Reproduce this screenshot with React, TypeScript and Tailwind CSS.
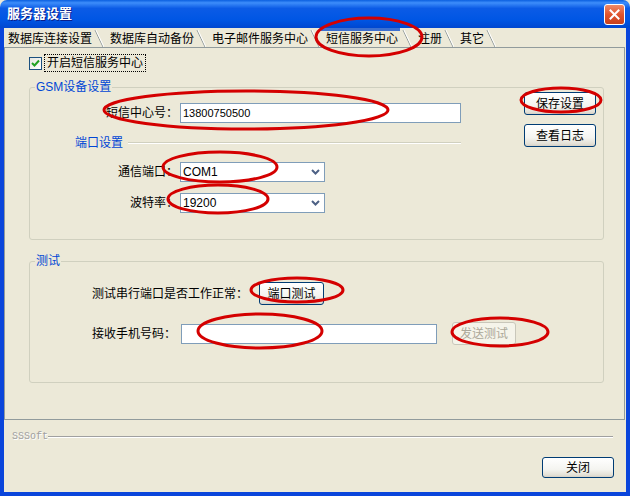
import React from "react";

const tabs = [
  { key: "db", label: "数据库连接设置", first: true },
  { key: "backup", label: "数据库自动备份" },
  { key: "mail", label: "电子邮件服务中心" },
  { key: "sms", label: "短信服务中心", active: true },
  { key: "reg", label: "注册" },
  { key: "other", label: "其它" },
];

const rings = [
  { cx: 369, cy: 37, rx: 53, ry: 19 },
  { cx: 246, cy: 110, rx: 142, ry: 19 },
  { cx: 561, cy: 100, rx: 40, ry: 12 },
  { cx: 220, cy: 167, rx: 57, ry: 15 },
  { cx: 218, cy: 199, rx: 50, ry: 14 },
  { cx: 297, cy: 290, rx: 46, ry: 12 },
  { cx: 260, cy: 331, rx: 62, ry: 17 },
  { cx: 500, cy: 332, rx: 48, ry: 14 },
];

function Slant() {
  return (
    <svg width="10" height="17" viewBox="0 0 10 17" className="ml-[2px] shrink-0">
      <line x1="1" y1="0" x2="9" y2="17" stroke="#919b9c" />
      <line x1="2" y1="0" x2="10" y2="17" stroke="#ffffff" />
    </svg>
  );
}

function XpButton({ children, disabled }: { children: React.ReactNode; disabled?: boolean }) {
  if (disabled) {
    return (
      <div className="flex h-full w-full items-center justify-center rounded-[3px] border border-[#c9c7ba] bg-[#f5f4ea] text-[#aca899]">
        {children}
      </div>
    );
  }
  return (
    <div className="flex h-full w-full items-center justify-center rounded-[3px] border border-[#003c74] bg-[linear-gradient(180deg,#ffffff_0%,#f4f4f0_60%,#e3e0d6_90%,#d6d0c5_100%)] text-black">
      {children}
    </div>
  );
}

function Combo({ value }: { value: string }) {
  return (
    <div className="flex h-[20px] w-[145px] items-center border border-[#7f9db9] bg-white">
      <span className="flex-1 pl-[2px] font-['Liberation_Sans',sans-serif] text-[12px]">{value}</span>
      <div className="flex h-full w-[17px] items-center justify-center">
        <svg width="9" height="6" viewBox="0 0 9 6">
          <path d="M1 1 L4.5 4.5 L8 1" fill="none" stroke="#4d6185" strokeWidth="2" />
        </svg>
      </div>
    </div>
  );
}

export default function App() {
  return (
    <div className="relative h-[496px] w-[630px] overflow-hidden bg-[#ece9d8] font-['Liberation_Sans','Noto_Sans_CJK_SC',sans-serif] text-[12px] leading-[14px] text-black">
      {/* Title bar */}
      <div className="flex h-[28px] items-center rounded-t-[7px] bg-[linear-gradient(180deg,#0a5fe0_0%,#3d8dfa_10%,#0b5be6_30%,#0056e4_70%,#0047d0_100%)] pl-[7px] pr-[5px]">
        <span className="flex-1 text-[13px] font-bold text-white [text-shadow:1px_1px_#0a1e8a]">服务器设置</span>
        <div className="flex h-[21px] w-[21px] items-center justify-center rounded-[3px] border border-white bg-[linear-gradient(180deg,#f08a67_0%,#e0552e_50%,#c7401d_100%)]">
          <svg width="11" height="11" viewBox="0 0 11 11">
            <path d="M1.5 1.5 L9.5 9.5 M9.5 1.5 L1.5 9.5" stroke="#ffffff" strokeWidth="2" strokeLinecap="square" />
          </svg>
        </div>
      </div>

      {/* Frame + client */}
      <div className="flex h-[468px] flex-col border-x-[4px] border-b-[4px] border-[#0a45db]">
        <div className="flex h-[464px] flex-col">
          {/* Tabs */}
          <div className="flex h-[19px] items-end">
            {tabs.map((t) =>
              t.active ? (
                <div key={t.key} className="flex h-[19px] items-end">
                  <span className="flex h-[19px] items-center border-t-[3px] border-[#3c6fd0] pl-[6px] pr-[2px]">{t.label}</span>
                  <Slant />
                </div>
              ) : (
                <div key={t.key} className="flex h-[17px] items-end">
                  <span className={t.first ? "flex h-[17px] items-center pl-[4px]" : "flex h-[17px] items-center pl-[6px]"}>{t.label}</span>
                  <Slant />
                </div>
              ),
            )}
          </div>

          {/* Tab panel */}
          <div className="mr-[1px] flex h-[373px] flex-col border border-[#919b9c] pl-[24px] pr-[20px]">
            <div className="mt-[6px] flex h-[18px] items-center">
              <div className="flex h-[13px] w-[13px] items-center justify-center border border-[#1c5180] bg-[linear-gradient(135deg,#e6e6e0_0%,#ffffff_100%)]">
                <svg width="9" height="9" viewBox="0 0 9 9">
                  <path d="M1 4 L3.5 6.5 L8 1.5" fill="none" stroke="#21a121" strokeWidth="2" />
                </svg>
              </div>
              <span className="ml-[2px] flex h-[18px] items-center border border-dotted border-black px-[2px]">开启短信服务中心</span>
            </div>

            {/* GSM group */}
            <div className="relative mt-[15px] flex rounded-[3px] border border-[#d0d0bf]">
              <span className="absolute -top-[8px] left-[5px] bg-[#ece9d8] px-[1px] text-[#0046d5]">GSM设备设置</span>
              <div className="flex w-[431px] flex-col pt-[15px] pb-[26px]">
                <div className="flex h-[20px] items-center">
                  <span className="w-[148px] text-right">短信中心号：</span>
                  <div className="ml-[2px] flex h-[20px] flex-1 items-center border border-[#7f9db9] bg-white pl-[2px] font-['Liberation_Sans',sans-serif] text-[11px]">
                    13800750500
                  </div>
                </div>
                <div className="mt-[13px] flex h-[14px] items-center pl-[45px]">
                  <span className="text-[#0046d5]">端口设置</span>
                  <div className="ml-[5px] h-[2px] flex-1 border-t border-b border-t-[#d0d0bf] border-b-white" />
                </div>
                <div className="mt-[12px] flex h-[20px] items-center">
                  <span className="w-[148px] text-right">通信端口：</span>
                  <div className="ml-[2px]">
                    <Combo value="COM1" />
                  </div>
                </div>
                <div className="mt-[11px] flex h-[20px] items-center">
                  <span className="w-[148px] text-right">波特率：</span>
                  <div className="ml-[2px]">
                    <Combo value="19200" />
                  </div>
                </div>
              </div>
              <div className="ml-[63px] flex flex-col gap-[9px] pt-[4px]">
                <div className="h-[23px] w-[72px]">
                  <XpButton>保存设置</XpButton>
                </div>
                <div className="h-[23px] w-[72px]">
                  <XpButton>查看日志</XpButton>
                </div>
              </div>
            </div>

            {/* Test group */}
            <div className="relative mt-[21px] flex flex-col rounded-[3px] border border-[#d0d0bf] pt-[20px] pb-[37px] pl-[62px]">
              <span className="absolute -top-[8px] left-[5px] bg-[#ece9d8] px-[1px] text-[#0046d5]">测试</span>
              <div className="flex h-[23px] items-center">
                <span>测试串行端口是否工作正常：</span>
                <div className="ml-[11px] h-[23px] w-[65px]">
                  <XpButton>端口测试</XpButton>
                </div>
              </div>
              <div className="mt-[17px] flex h-[23px] items-center">
                <span>接收手机号码：</span>
                <div className="ml-[5px] h-[20px] w-[256px] border border-[#7f9db9] bg-white" />
                <div className="ml-[15px] h-[23px] w-[64px]">
                  <XpButton disabled>发送测试</XpButton>
                </div>
              </div>
            </div>
          </div>

          {/* Footer */}
          <div className="mt-[11px] flex h-[12px] items-center pl-[8px] pr-[13px]">
            <span className="font-['Liberation_Mono',monospace] text-[10px] text-[#a0a0a0] [text-shadow:1px_1px_#ffffff]">SSSoft</span>
            <div className="h-[2px] flex-1 border-t border-b border-t-[#a0a0a0] border-b-white" />
          </div>
          <div className="mt-[14px] flex justify-end pr-[12px]">
            <div className="h-[21px] w-[72px]">
              <XpButton>关闭</XpButton>
            </div>
          </div>
        </div>
      </div>

      {/* Red annotation rings */}
      <svg className="pointer-events-none absolute inset-0" width="630" height="496" viewBox="0 0 630 496">
        {rings.map((r, i) => (
          <ellipse key={i} cx={r.cx} cy={r.cy} rx={r.rx} ry={r.ry} fill="none" stroke="#d40000" strokeWidth="3" />
        ))}
      </svg>
    </div>
  );
}
